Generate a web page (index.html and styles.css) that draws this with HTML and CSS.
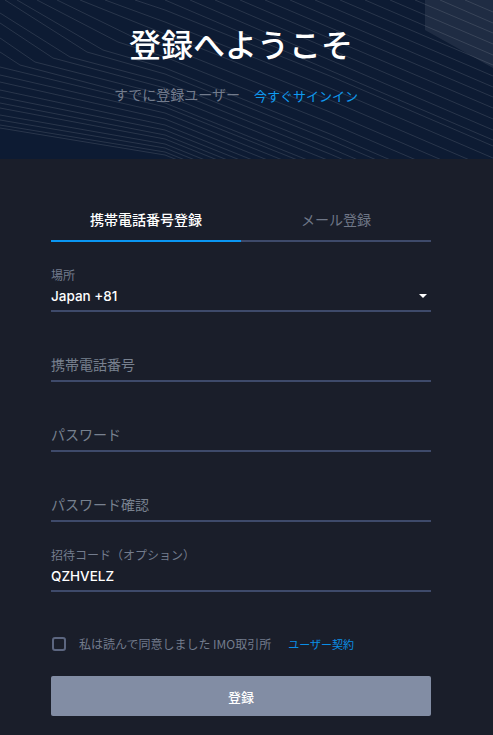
FILE: index.html
```html
<!DOCTYPE html>
<html lang="ja">
<head>
<meta charset="utf-8">
<title>登録</title>
<link rel="stylesheet" href="styles.css">
</head>
<body>
<header class="hero">
  <svg class="hero-art" viewBox="0 0 493 159" width="493" height="159" aria-hidden="true">
    <polygon class="hero-block" points="425,0 425,30 493,68 493,0"/>
    <path class="hero-lines" d="M0 128L165 155L330 221M0 125L165 152L330 218M0 120L165 148L330 214M0 115L165 144L330 210M0 108L165 139L330 205M0 103L165 135L330 201M0 97L165 130L330 196M0 90L165 125L330 191M0 82L165 119L330 185M0 75L165 113L330 179M0 67L165 107L330 173
    M0 52L20 65L165 103L330 169M0 38L35 62L165 95L330 161M0 23L53 58L165 88L330 154L493 224M0 13L70 57L165 82L330 148L493 218M5 0L87 52L165 74L330 140L493 210M17 0L103 50L165 68L330 134L493 204M37 0L118 42L165 57L330 123L493 193M57 0L135 38L165 46L330 112L493 182
    M80 0L165 34L330 100L493 170M105 0L165 22L330 88L493 158M135 0L165 10L330 76L493 146M165 0L493 140M190 0L493 130M215 0L493 119M240 0L493 108M265 0L493 97M290 0L493 87M315 0L493 76M340 0L493 65M365 0L493 55M390 0L493 44M415 0L493 33M440 0L493 23M465 0L493 12"/>
  </svg>
  <h1 class="hero-title">登録へようこそ</h1>
  <p class="hero-sub"><span class="hero-sub-text">すでに登録ユーザー</span><a class="hero-link" href="#">今すぐサインイン</a></p>
</header>
<main class="panel">
  <div class="tabs">
    <div class="tab tab-active">携帯電話番号登録</div>
    <div class="tab">メール登録</div>
  </div>
  <div class="field">
    <span class="field-label">場所</span>
    <div class="field-value field-select">Japan +81<span class="caret"></span></div>
  </div>
  <div class="field"><span class="field-hint">携帯電話番号</span></div>
  <div class="field"><span class="field-hint">パスワード</span></div>
  <div class="field"><span class="field-hint">パスワード確認</span></div>
  <div class="field">
    <span class="field-label">招待コード（オプション）</span>
    <div class="field-value">QZHVELZ</div>
  </div>
  <div class="agree">
    <span class="checkbox"></span>
    <span class="agree-text">私は読んで同意しました IMO取引所</span>
    <a class="agree-link" href="#">ユーザー契約</a>
  </div>
  <button class="submit" type="button">登録</button>
</main>
</body>
</html>
```

FILE: styles.css
```css
* { box-sizing: border-box; }
html, body { margin: 0; height: 735px; overflow: hidden; }
body {
  background: #1a1e2a;
  font-family: Inter, "Noto Sans CJK JP", sans-serif;
  color: #fff;
}
.hero {
  position: relative;
  height: 159px;
  background: #0d1b33;
  overflow: hidden;
  display: flex;
  flex-direction: column;
  align-items: center;
  padding-top: 21px;
}
.hero-art { position: absolute; top: 0; left: 0; }
.hero-block { fill: rgba(255, 255, 255, 0.08); }
.hero-lines { fill: none; stroke: rgba(255, 255, 255, 0.15); stroke-width: 0.8; }
.hero-title {
  position: relative;
  margin: 0;
  padding-right: 11px;
  font-family: "Noto Sans CJK JP", sans-serif;
  font-size: 32px;
  line-height: 45px;
  font-weight: 500;
}
.hero-sub {
  position: relative;
  margin: 18px 0 0;
  padding-right: 21px;
  display: flex;
  align-items: flex-end;
  font-family: "Noto Sans CJK JP", sans-serif;
}
.hero-sub-text { font-size: 14px; line-height: 20px; color: #737c8d; }
.hero-link {
  margin: 0 0 -2px 14px;
  font-size: 13px;
  line-height: 20px;
  color: #0f9bf0;
  text-decoration: none;
}
.panel { padding: 41px 62px 0 51px; }
.tabs { display: flex; }
.tab {
  flex: 1;
  height: 42px;
  border-bottom: 2px solid #3e4a6a;
  font-family: "Noto Sans CJK JP", sans-serif;
  font-size: 14px;
  line-height: 39px;
  text-align: center;
  color: #6f7787;
}
.tab-active { color: #fff; font-weight: 500; border-bottom-color: #0a96f2; }
.field {
  height: 70px;
  border-bottom: 2px solid #3e4a6a;
  display: flex;
  flex-direction: column;
  justify-content: flex-end;
}
.field-label {
  margin-bottom: 2px;
  font-family: "Noto Sans CJK JP", sans-serif;
  font-size: 12px;
  line-height: 18px;
  color: #737c8d;
}
.field-value {
  padding-bottom: 4px;
  font-size: 13.5px;
  line-height: 20px;
  font-weight: 500;
  color: #fff;
}
.field-select { display: flex; align-items: center; justify-content: space-between; padding-right: 4px; }
.caret {
  width: 0;
  height: 0;
  border-left: 4px solid transparent;
  border-right: 4px solid transparent;
  border-top: 4px solid #fff;
}
.field-hint {
  padding-bottom: 6px;
  font-family: "Noto Sans CJK JP", sans-serif;
  font-size: 14px;
  line-height: 20px;
  color: #78818f;
}
.agree {
  margin-top: 44px;
  height: 16px;
  display: flex;
  align-items: center;
  font-family: "Noto Sans CJK JP", sans-serif;
}
.checkbox {
  width: 14px;
  height: 14px;
  margin-left: 1px;
  border: 2px solid #5c6680;
  border-radius: 3px;
}
.agree-text { margin-left: 13px; font-size: 12px; line-height: 16px; color: #737c8d; }
.agree-link { margin-left: 17px; font-size: 11px; line-height: 16px; color: #0a8ee6; text-decoration: none; }
.submit {
  display: block;
  width: 100%;
  height: 40px;
  margin-top: 24px;
  border: 0;
  border-radius: 2px;
  background: #828da4;
  color: #fff;
  font-family: "Noto Sans CJK JP", sans-serif;
  font-size: 13px;
  font-weight: 500;
}
```
